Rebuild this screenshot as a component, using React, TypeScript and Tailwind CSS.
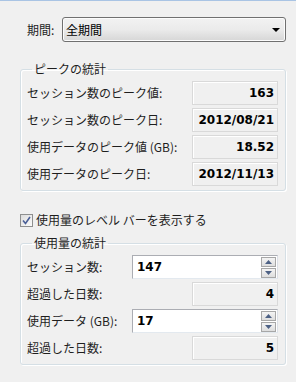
import React from 'react';

const jp = { fontFamily: '"Noto Sans CJK JP", "Noto Sans", sans-serif' };
const num = { fontFamily: '"DejaVu Sans", "Liberation Sans", sans-serif' };

const ReadOnlyRow = ({ label, value }: { label: string; value: string }) => (
  <div className="flex items-center justify-between h-[24px]">
    <span className="text-[12px] text-[#1e1e1e] leading-none">{label}</span>
    <div
      className="w-[86px] h-[24px] border border-[#d9d9d9] bg-[#f0f0f0] shadow-[inset_1px_1px_0_#fff] flex items-center justify-end pr-[3px] text-[12px] font-bold text-black"
      style={num}
    >
      {value}
    </div>
  </div>
);

const SpinRow = ({ label, value }: { label: string; value: string }) => (
  <div className="flex items-center justify-between h-[24px]">
    <span className="text-[12px] text-[#1e1e1e] leading-none">{label}</span>
    <div className="w-[146px] h-[24px] border border-[#abadb3] border-b-[#e3e9ef] border-r-[#dbdfe6] bg-white flex items-center">
      <span className="flex-1 pl-[4px] text-[12px] font-bold text-black" style={num}>
        {value}
      </span>
      <div className="flex flex-col gap-[1px] mr-[1px]">
        <SpinBtn up />
        <SpinBtn />
      </div>
    </div>
  </div>
);

const SpinBtn = ({ up }: { up?: boolean }) => (
  <div className="w-[15px] h-[10px] border border-[#a7a7a7] bg-gradient-to-b from-[#f4f4f4] to-[#dedede] flex items-center justify-center">
    <svg width="7" height="4" viewBox="0 0 7 4">
      {up ? <path d="M0 4 L3.5 0 L7 4 Z" fill="#4d6185" /> : <path d="M0 0 L7 0 L3.5 4 Z" fill="#4d6185" />}
    </svg>
  </div>
);

const Group = ({ title, children }: { title: string; children: React.ReactNode }) => (
  <fieldset className="ml-[20px] w-[266px] border border-[#d5dfe5] rounded-[3px] shadow-[inset_1px_1px_0_#fff,1px_1px_0_#fff] pl-[6px] pr-[7px] pb-[4px]">
    <legend className="ml-[5px] px-[2px] text-[12px] leading-[16px] text-[#1e1e1e]">{title}</legend>
    <div className="flex flex-col gap-[3px] mt-[4px]">{children}</div>
  </fieldset>
);

export default function App() {
  return (
    <div className="w-[296px] h-[382px] bg-[#f0f0f0] border-t border-[#a9c4e4] overflow-hidden" style={jp}>
      {/* 期間 */}
      <div className="flex items-center pl-[27px] pt-[16px]">
        <span className="w-[35px] text-[12px] text-[#1e1e1e]">期間:</span>
        <div className="w-[224px] h-[25px] border border-[#707070] rounded-[3px] bg-gradient-to-b from-[#f2f2f2] via-[#ebebeb] to-[#d6d6d6] shadow-[inset_0_0_0_1px_#fcfcfc] flex items-center justify-between pl-[3px] pr-[5px]">
          <span className="text-[12px] text-black">全期間</span>
          <svg width="8" height="4" viewBox="0 0 8 4">
            <path d="M0 0 L8 0 L4 4 Z" fill="#000" />
          </svg>
        </div>
      </div>

      <div className="mt-[19px]">
        <Group title="ピークの統計">
          <ReadOnlyRow label="セッション数のピーク値:" value="163" />
          <ReadOnlyRow label="セッション数のピーク日:" value="2012/08/21" />
          <ReadOnlyRow label="使用データのピーク値 (GB):" value="18.52" />
          <ReadOnlyRow label="使用データのピーク日:" value="2012/11/13" />
        </Group>
      </div>

      {/* checkbox */}
      <label className="flex items-center ml-[20px] mt-[20px] gap-[3px]">
        <span className="w-[13px] h-[13px] border border-[#8e8f8f] bg-gradient-to-br from-[#dcdcdc] to-[#fbfbfb] flex items-center justify-center">
          <svg width="9" height="9" viewBox="0 0 9 9">
            <path d="M1 4.5 L3.5 7.5 L8 1" fill="none" stroke="#4a5f97" strokeWidth="1.6" />
          </svg>
        </span>
        <span className="text-[12px] text-[#1e1e1e]">使用量のレベル バーを表示する</span>
      </label>

      <div className="mt-[6px]">
        <Group title="使用量の統計">
          <SpinRow label="セッション数:" value="147" />
          <ReadOnlyRow label="超過した日数:" value="4" />
          <SpinRow label="使用データ (GB):" value="17" />
          <ReadOnlyRow label="超過した日数:" value="5" />
        </Group>
      </div>
    </div>
  );
}
